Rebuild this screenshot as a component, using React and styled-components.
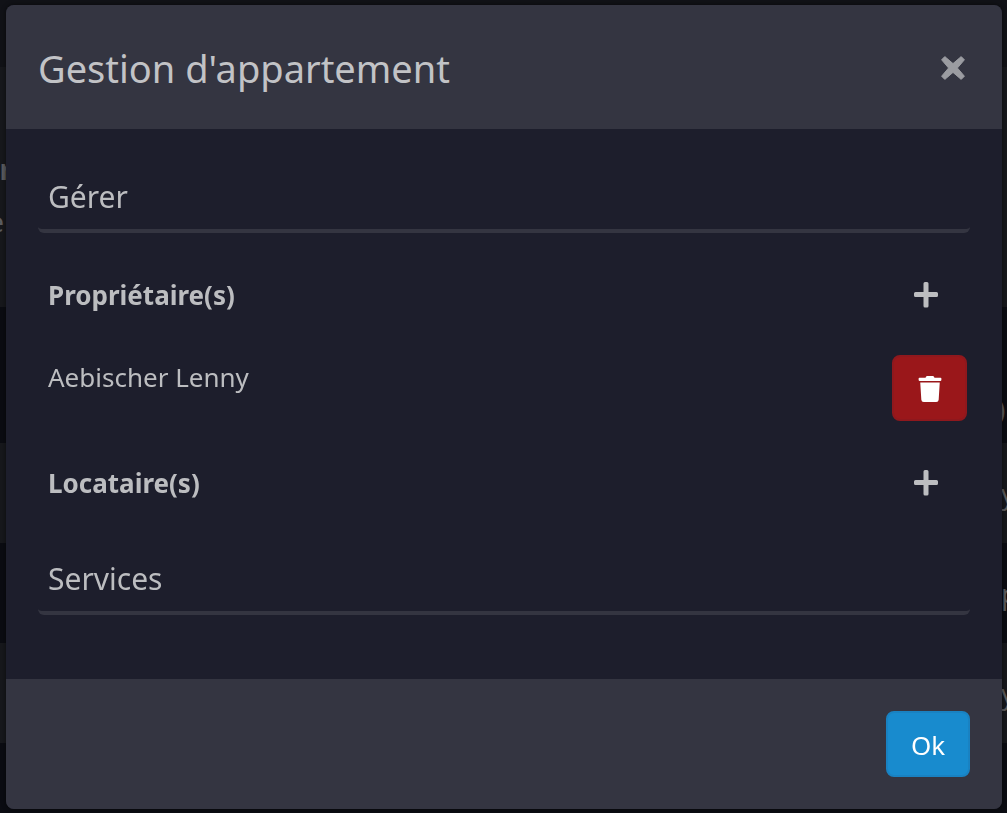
import styled, { createGlobalStyle } from "styled-components";
import { FaTrash } from "react-icons/fa";

const GlobalStyle = createGlobalStyle`
  * {
    box-sizing: border-box;
  }
  body {
    margin: 0;
    background-color: #0b0c12;
    font-family: "Noto Sans", "Open Sans", sans-serif;
    color: #bcbdc0;
  }
`;

const Page = styled.div`
  position: fixed;
  inset: 0;
  overflow: hidden;
  font-size: 28px;
  color: #5c5d60;
`;

const Band = styled.div`
  display: flex;
  align-items: ${(props) => (props.$low ? "flex-end" : "center")};
  justify-content: space-between;
  height: ${(props) => props.$height}px;
  padding-bottom: ${(props) => (props.$low ? 8 : 0)}px;
  background-color: ${(props) => (props.$light ? "#17181c" : "#0b0c12")};
  &:first-child {
    background-color: #111217;
  }
`;

const Side = styled.span`
  display: flex;
  flex-direction: column;
  align-items: ${(props) => (props.$end ? "flex-end" : "flex-start")};
  width: ${(props) => props.$width}px;
  padding-top: ${(props) => (props.$end ? 16 : 0)}px;
  line-height: 52px;
`;

const Letter = styled.span`
  font-weight: ${(props) => (props.$bold ? 700 : 400)};
  padding-right: ${(props) => (props.$inset ? 8 : 0)}px;
`;

const Overlay = styled.div`
  position: relative;
  min-height: 100vh;
  padding: 5px 5px 4px 6px;
  display: flex;
`;

const Modal = styled.section`
  flex: 1;
  display: flex;
  flex-direction: column;
  border-radius: 8px;
  overflow: hidden;
  background-color: #1d1e2c;
  box-shadow: 0 0 4px 1px rgba(0, 0, 0, 0.4);
`;

const Header = styled.header`
  display: flex;
  align-items: center;
  justify-content: space-between;
  min-height: 124px;
  padding: 34px 31px 32px 32px;
  background-color: #343541;
`;

const Title = styled.h1`
  margin: 0;
  font-size: 38px;
  font-weight: 400;
  line-height: 58px;
  color: #c2c3c6;
`;

const IconButton = styled.button`
  display: flex;
  align-items: center;
  justify-content: center;
  width: 36px;
  height: 36px;
  padding: 0;
  border: none;
  background: none;
  color: ${(props) => (props.$muted ? "#9b9ca1" : "#bcbdc0")};
  cursor: pointer;
`;

const Body = styled.div`
  flex: 1;
  padding: 32px;
`;

const SectionTitle = styled.h2`
  margin: 0;
  height: 72px;
  padding: 0 10px;
  border-bottom: 4px solid #343541;
  border-radius: 6px;
  font-size: 30px;
  font-weight: 400;
  line-height: 72px;
`;

const List = styled.div`
  padding: 16px 0 14px;
`;

const GroupTitle = styled.div`
  display: flex;
  align-items: center;
  justify-content: space-between;
  height: 92px;
  padding: 0 26px 0 10px;
`;

const GroupName = styled.h3`
  margin: 0;
  font-size: 26px;
  font-weight: 700;
`;

const Person = styled.div`
  display: flex;
  align-items: flex-start;
  justify-content: space-between;
  height: 96px;
  padding: 14px 3px 0 10px;
  font-size: 26px;
  line-height: 44px;
`;

const Button = styled.button`
  display: flex;
  align-items: center;
  justify-content: center;
  min-width: ${(props) => (props.$danger ? 75 : 84)}px;
  height: 66px;
  padding: 2px 22px 0;
  border: 2px solid ${(props) => (props.$danger ? "#8f181d" : "#1982c2")};
  border-radius: 8px;
  background-color: ${(props) => (props.$danger ? "#9a171a" : "#188bce")};
  color: #fff;
  font-family: inherit;
  font-size: 26px;
  cursor: pointer;
`;

const Footer = styled.footer`
  display: flex;
  justify-content: flex-end;
  padding: 32px;
  background-color: #343541;
`;

const CloseIcon = () => (
  <svg width="24" height="24" viewBox="0 0 24 24" aria-hidden="true">
    <path
      d="M3.8 0.6L12 7.6L20.2 0.6L23.4 3.8L16.4 12L23.4 20.2L20.2 23.4L12 16.4L3.8 23.4L0.6 20.2L7.6 12L0.6 3.8Z"
      fill="currentColor"
      stroke="currentColor"
      strokeWidth="1"
      strokeLinejoin="round"
    />
  </svg>
);

const PlusIcon = () => (
  <svg width="26" height="26" viewBox="0 0 26 26" aria-hidden="true">
    <path
      d="M12 0H14Q15.5 0 15.5 1.5V10H23.5Q25 10 25 11.5V13.5Q25 15 23.5 15H15.5V24Q15.5 25.5 14 25.5H12Q10.5 25.5 10.5 24V15H2.5Q1 15 1 13.5V11.5Q1 10 2.5 10H10.5V1.5Q10.5 0 12 0Z"
      fill="currentColor"
    />
  </svg>
);

const bands = [
  { height: 67 },
  { height: 240, light: true, left: ["r", "e"], bold: "r" },
  { height: 136, low: true, right: [")"] },
  { height: 100, light: true, right: ["y"] },
  { height: 100, right: ["p"] },
  { height: 100, light: true, right: ["y"] },
  { height: 100 },
];

const groups = [
  { name: "Propriétaire(s)", people: ["Aebischer Lenny"] },
  { name: "Locataire(s)", people: [] },
];

const Letters = ({ items = [], bold, end, width }) => (
  <Side $end={end} $width={width}>
    {items.map((text) => (
      <Letter key={text} $bold={text === bold} $inset={end && text !== bold}>
        {text}
      </Letter>
    ))}
  </Side>
);

export default function App() {
  return (
    <>
      <GlobalStyle />
      <Page aria-hidden="true">
        {bands.map((band, index) => (
          <Band
            key={index}
            $height={band.height}
            $light={band.light}
            $low={band.low}
          >
            <Letters items={band.left} bold={band.bold} width={12} end />
            <Letters items={band.right} width={band.low ? 10 : 6} />
          </Band>
        ))}
      </Page>
      <Overlay>
        <Modal role="dialog" aria-labelledby="modal-title">
          <Header>
            <Title id="modal-title">Gestion d'appartement</Title>
            <IconButton type="button" aria-label="Fermer" $muted>
              <CloseIcon />
            </IconButton>
          </Header>
          <Body>
            <SectionTitle>Gérer</SectionTitle>
            <List>
              {groups.map((group) => (
                <div key={group.name}>
                  <GroupTitle>
                    <GroupName>{group.name}</GroupName>
                    <IconButton type="button" aria-label="Ajouter">
                      <PlusIcon />
                    </IconButton>
                  </GroupTitle>
                  {group.people.map((person) => (
                    <Person key={person}>
                      <span>{person}</span>
                      <Button type="button" aria-label="Supprimer" $danger>
                        <FaTrash />
                      </Button>
                    </Person>
                  ))}
                </div>
              ))}
            </List>
            <SectionTitle>Services</SectionTitle>
          </Body>
          <Footer>
            <Button type="button">Ok</Button>
          </Footer>
        </Modal>
      </Overlay>
    </>
  );
}
